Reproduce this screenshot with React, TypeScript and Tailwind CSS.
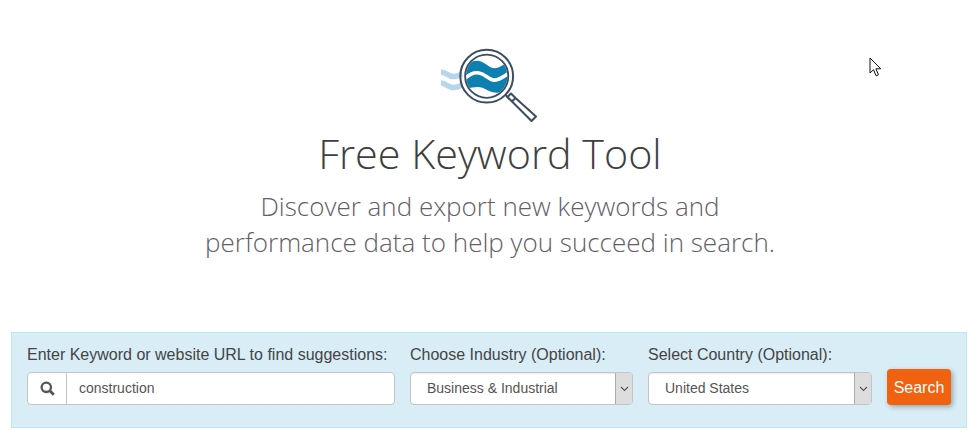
const BODY = "font-['Liberation_Sans',Arial,sans-serif]";

function Logo() {
  return (
    <svg width="100" height="76" viewBox="0 0 100 76" fill="none" className="block">
      <defs>
        <clipPath id="lens">
          <circle cx="46.7" cy="30.2" r="20.7" />
        </clipPath>
      </defs>
      {/* pale waves behind the lens */}
      <path d="M1 26c5 0 7 4.500 12 4.500s5-1 9-2.500" stroke="#b5d7e9" strokeWidth="5.500" />
      <path d="M1 37c5 0 7 4.500 12 4.500s5-1 9-2.500" stroke="#b5d7e9" strokeWidth="5.500" />
      <g clipPath="url(#lens)">
        <path
          d="M24 21c5-4 9-7 15-6s9 6 14 7 10-3 16-7v27c-6 4-11 6-17 4s-9-5-14-5-9 1-14 3z"
          fill="#0e7fb1"
        />
        <path d="M24 33c5-4 9-7 15-6s9 6 14 7 10-3 16-7" stroke="#ffffff" strokeWidth="3.600" />
      </g>
      <circle cx="46.7" cy="30.2" r="21.6" stroke="#3b4d63" strokeWidth="1.800" />
      <circle cx="46.7" cy="30.2" r="26.4" stroke="#3b4d63" strokeWidth="2" />
      <path d="M65.500 49l4 4" stroke="#3b4d63" strokeWidth="2" />
      <path
        d="M71 47.500l4.500 4.500-3.500 3.500-4.500-4.500zM75.500 52L96 70.500 91.500 75 72 55.500z"
        stroke="#3b4d63"
        strokeWidth="2"
        strokeLinejoin="round"
        fill="#ffffff"
      />
    </svg>
  );
}

function Cursor() {
  return (
    <svg
      width="14"
      height="21"
      viewBox="0 0 14 21"
      className="absolute left-[869px] top-[57px]"
    >
      <path
        d="M1 1v15l3.500-3.300 2.600 6.100 2.400-1-2.600-6h4.800z"
        fill="#ffffff"
        stroke="#111111"
        strokeWidth="1"
      />
    </svg>
  );
}

function FakeSelect({ value, width }: { value: string; width: string }) {
  return (
    <div
      className={`${width} flex h-[33px] overflow-hidden rounded-[4px] border border-[#c4c4c4] bg-white shadow-[inset_0_1px_1px_rgba(0,0,0,0.08)]`}
    >
      <span className="flex-1 pl-4 text-[14px] leading-[30px] text-[#555555]">{value}</span>
      <span className="flex w-[17px] items-center justify-center border-l border-[#ababab] bg-[#dddddd]">
        <svg width="9" height="6" viewBox="0 0 9 6" fill="none">
          <path d="M1 1l3.500 3.500L8 1" stroke="#555555" strokeWidth="1.100" />
        </svg>
      </span>
    </div>
  );
}

function Field({ label, children }: { label: string; children: React.ReactNode }) {
  return (
    <div className="flex flex-col gap-[4px]">
      <label className="text-[16px] leading-[26px] text-[#444444]">{label}</label>
      {children}
    </div>
  );
}

export default function App() {
  return (
    <div className={`relative h-[445px] w-[978px] overflow-hidden bg-white ${BODY}`}>
      <Cursor />

      <div className="flex flex-col items-center pl-[2px] pt-[46px]">
        <Logo />
        <h1 className="mt-[1px] font-['Open_Sans',sans-serif] text-[41.3px] font-light leading-[60px] text-[#3f3f3f]">
          Free Keyword Tool
        </h1>
        <p className="mt-[5px] text-center font-['Open_Sans',sans-serif] text-[26px] font-light leading-[36px] text-[#635e68]">
          Discover and export new keywords and
          <br />
          performance data to help you succeed in search.
        </p>
      </div>

      <div className="ml-[11px] mt-[72px] flex h-[96px] w-[956px] gap-[15px] border border-[#bce8f1] bg-[#d9edf7] pl-[15px] pt-[9px]">
        <Field label="Enter Keyword or website URL to find suggestions:">
          <div className="flex h-[33px] w-[368px] rounded-[4px] border border-[#c4c4c4] bg-white">
            <span className="flex w-[39px] items-center justify-center border-r border-[#c4c4c4]">
              <svg width="15" height="15" viewBox="0 0 15 15" fill="none">
                <circle cx="6.300" cy="6.300" r="4.700" stroke="#555555" strokeWidth="2.300" />
                <path d="M9.800 9.800l4 4" stroke="#555555" strokeWidth="2.800" />
              </svg>
            </span>
            <span className="pl-3 text-[14px] leading-[30px] text-[#555555]">construction</span>
          </div>
        </Field>
        <Field label="Choose Industry (Optional):">
          <FakeSelect value="Business & Industrial" width="w-[223px]" />
        </Field>
        <Field label="Select Country (Optional):">
          <FakeSelect value="United States" width="w-[224px]" />
        </Field>
        <button
          type="button"
          className="mt-[27px] h-[36px] w-[64px] rounded-[4px] bg-[#f0620f] pt-[1px] text-[16px] text-white shadow-[2px_2px_5px_rgba(0,0,0,0.3)]"
        >
          Search
        </button>
      </div>
    </div>
  );
}
